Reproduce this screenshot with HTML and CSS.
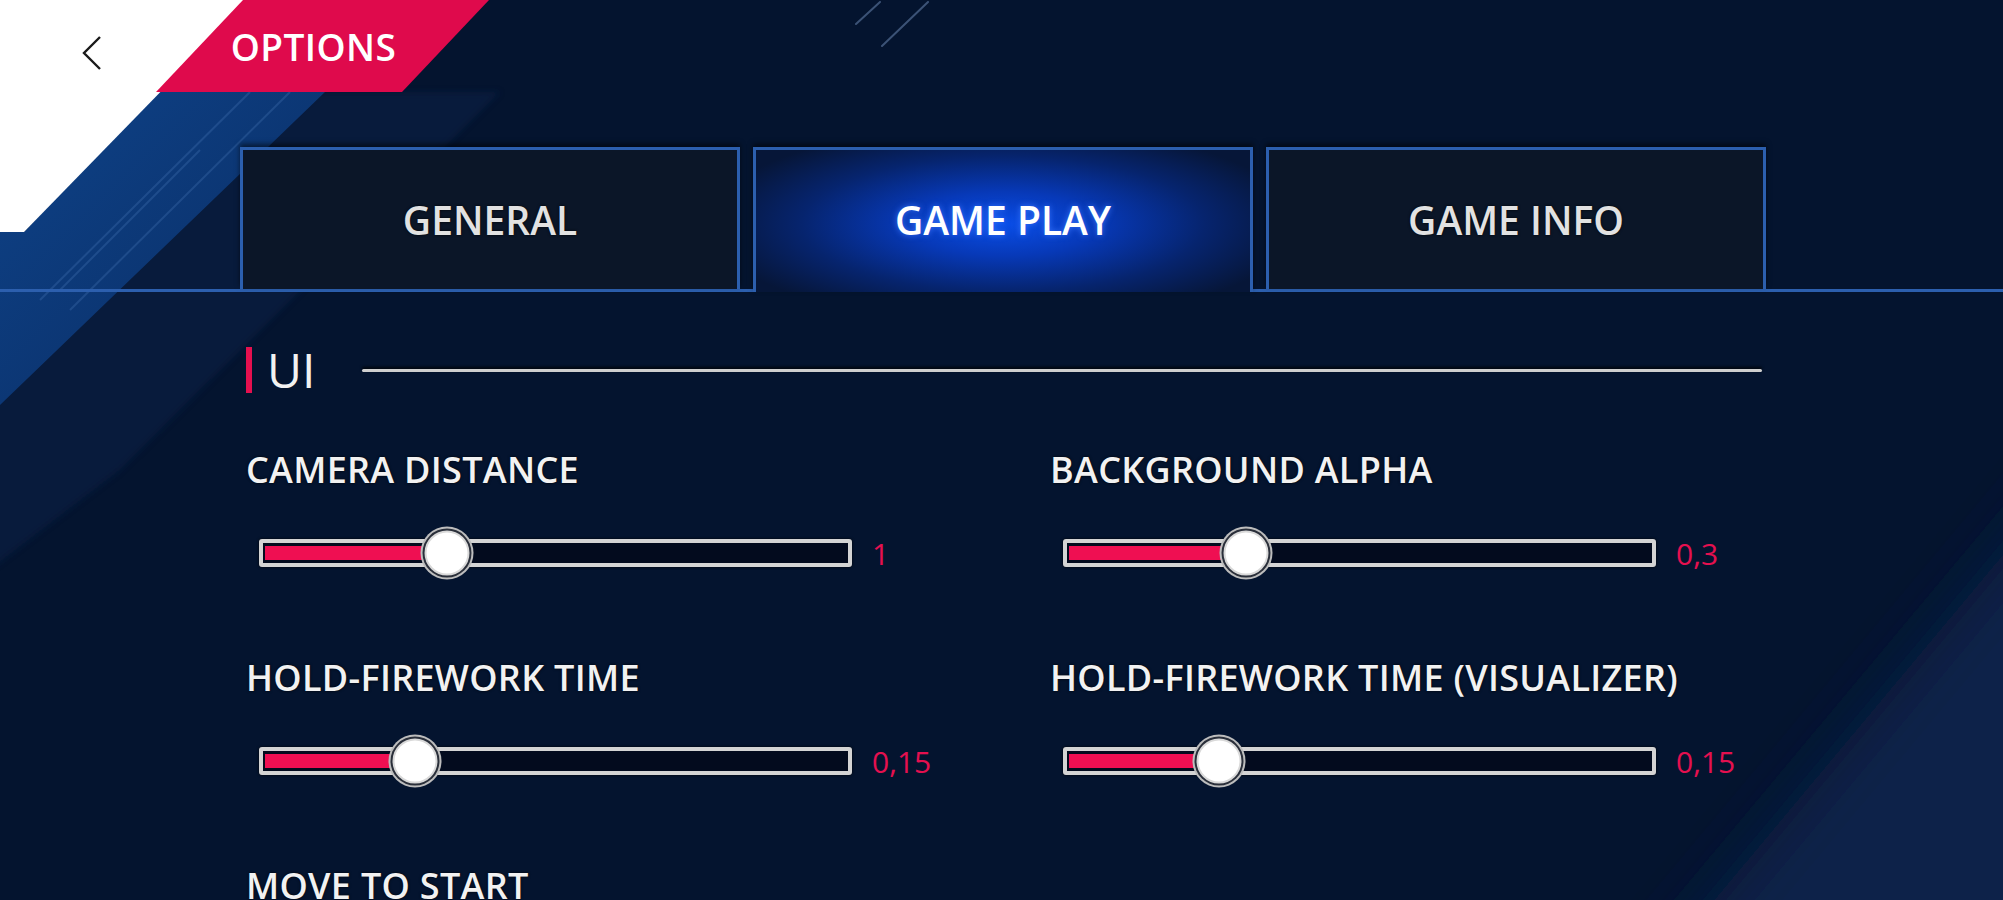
FILE: index.html
```html
<!DOCTYPE html>
<html lang="en">
<head>
<meta charset="utf-8">
<title>Options</title>
<link rel="stylesheet" href="styles.css">
</head>
<body>
<div class="screen">
  <svg class="bg" viewBox="0 0 2003 900" width="2003" height="900" aria-hidden="true">
    <defs>
      <linearGradient id="band" x1="0" y1="0" x2="1" y2="1">
        <stop offset="0" stop-color="#0e4288"/>
        <stop offset="1" stop-color="#0a2c62"/>
      </linearGradient>
      <filter id="soft" filterUnits="userSpaceOnUse" x="1000" y="0" width="1600" height="1400">
        <feGaussianBlur stdDeviation="30"/>
      </filter>
      <filter id="soft2" filterUnits="userSpaceOnUse" x="-200" y="0" width="900" height="800">
        <feGaussianBlur stdDeviation="3"/>
      </filter>
    </defs>
    <rect width="2003" height="900" fill="#04142f"/>
    <polygon points="2400,80 2400,1300 1380,1300" fill="#0a2249" filter="url(#soft)"/>
    <polygon points="320,92 500,92 120,470 -50,600 -50,400" fill="#08204a" opacity="0.5" filter="url(#soft2)"/>
    <polygon points="156,92 325,92 0,405 0,232 24,232" fill="url(#band)"/>
    <g stroke="#4a78b8" stroke-width="2" opacity="0.3">
      <line x1="250" y1="92" x2="40" y2="300"/>
      <line x1="290" y1="92" x2="70" y2="310"/>
      <line x1="200" y1="150" x2="60" y2="290"/>
    </g>
    <polygon points="0,0 250,0 24,232 0,232" fill="#ffffff"/>
    <g stroke="#8fb0e0" stroke-width="2" opacity="0.4" stroke-linecap="round">
      <line x1="928" y1="2" x2="882" y2="46"/>
      <line x1="880" y1="2" x2="856" y2="24"/>
    </g>
  </svg>

  <header class="topbar">
    <button class="back" type="button" aria-label="Back">
      <svg viewBox="0 0 24 38" width="24" height="38"><polyline points="20,3 4,19 20,35" fill="none" stroke="#1a1a1a" stroke-width="2.4"/></svg>
    </button>
    <div class="title"><span>OPTIONS</span></div>
  </header>

  <nav class="tabs">
    <div class="tab">GENERAL</div>
    <div class="tab active">GAME PLAY</div>
    <div class="tab">GAME INFO</div>
  </nav>

  <main class="content">
    <div class="section-head">
      <span class="mark"></span>
      <h2 class="section-title">UI</h2>
      <span class="rule"></span>
    </div>

    <div class="grid">
      <div class="setting">
        <div class="label">CAMERA DISTANCE</div>
        <div class="slider">
          <div class="track"><div class="fill" style="width:31.5%"></div><div class="thumb" style="left:31.5%"></div></div>
          <span class="value">1</span>
        </div>
      </div>
      <div class="setting">
        <div class="label">BACKGROUND ALPHA</div>
        <div class="slider">
          <div class="track"><div class="fill" style="width:30.6%"></div><div class="thumb" style="left:30.6%"></div></div>
          <span class="value">0,3</span>
        </div>
      </div>
      <div class="setting">
        <div class="label">HOLD-FIREWORK TIME</div>
        <div class="slider">
          <div class="track"><div class="fill" style="width:26%"></div><div class="thumb" style="left:26%"></div></div>
          <span class="value">0,15</span>
        </div>
      </div>
      <div class="setting">
        <div class="label">HOLD-FIREWORK TIME (VISUALIZER)</div>
        <div class="slider">
          <div class="track"><div class="fill" style="width:25.9%"></div><div class="thumb" style="left:25.9%"></div></div>
          <span class="value">0,15</span>
        </div>
      </div>
      <div class="setting">
        <div class="label">MOVE TO START</div>
      </div>
    </div>
  </main>
</div>
</body>
</html>
```

FILE: styles.css
```css
* { box-sizing: border-box; }

html, body {
  margin: 0;
  padding: 0;
  width: 2003px;
  height: 900px;
  overflow: hidden;
  background: #04142f;
}

.screen {
  position: relative;
  width: 2003px;
  height: 900px;
  overflow: hidden;
  font-family: "Open Sans", "Noto Sans", sans-serif;
  color: #f2f2f2;
}

.bg {
  position: absolute;
  left: 0;
  top: 0;
  z-index: 0;
}

.topbar, .tabs, .content {
  position: relative;
  z-index: 1;
}

/* ---------- header ---------- */
.topbar {
  display: flex;
  height: 92px;
  padding-left: 80px;
}

.back {
  align-self: flex-start;
  margin-top: 34px;
  width: 24px;
  height: 38px;
  padding: 0;
  border: 0;
  background: none;
  margin-right: 52px;
}
.back svg { display: block; }

.title {
  width: 333px;
  height: 92px;
  background: #df0a4c;
  clip-path: polygon(87px 0, 100% 0, calc(100% - 87px) 100%, 0 100%);
  display: flex;
  align-items: center;
  justify-content: center;
  padding-right: 18px;
}
.title span {
  font-size: 37px;
  font-weight: 600;
  color: #ffffff;
  letter-spacing: 0.4px;
}

/* ---------- tabs ---------- */
.tabs {
  display: flex;
  align-items: flex-end;
  gap: 13px;
  margin-top: 55px;
  padding-left: 240px;
  border-bottom: 3px solid #2c5fae;
}

.tab {
  width: 500px;
  height: 142px;
  border: 3px solid #2c5fae;
  border-bottom: 0;
  background: #0b1628;
  box-shadow: 0 -3px 5px rgba(0, 0, 0, 0.55);
  display: flex;
  align-items: center;
  justify-content: center;
  font-size: 39px;
  font-weight: 600;
  color: #e2e2e2;
  text-shadow: 0 0 3px rgba(0, 0, 0, 0.9);
}

.tab.active {
  height: 145px;
  margin-bottom: -3px;
  padding-bottom: 3px;
  background: radial-gradient(ellipse 60% 70% at 50% 52%, #0a4ee8 0%, #0739b8 32%, #06246e 68%, #061638 100%);
  color: #ffffff;
  text-shadow: 0 0 6px rgba(60, 120, 255, 0.9);
}

/* ---------- content ---------- */
.content {
  padding-left: 246px;
}

.section-head {
  display: flex;
  align-items: center;
  width: 1516px;
  height: 46px;
  margin-top: 55px;
}

.mark {
  width: 6px;
  height: 46px;
  background: #e5104f;
}

.section-title {
  margin: 0 0 0 15px;
  font-size: 48px;
  font-weight: 500;
  line-height: 46px;
  color: #f2f2f2;
}

.rule {
  flex: 1;
  height: 3px;
  margin-left: 47px;
  background: #cfcfcf;
  border-radius: 2px;
  box-shadow: 0 -2px 3px rgba(0, 0, 0, 0.8);
}

.grid {
  display: grid;
  grid-template-columns: 804px 804px;
  row-gap: 83px;
  margin-top: 59px;
}

.setting {
  display: flex;
  flex-direction: column;
}

.label {
  height: 36px;
  line-height: 36px;
  font-size: 36px;
  font-weight: 600;
  color: #f2f2f2;
  text-shadow: 0 0 3px rgba(0, 0, 0, 0.9);
  letter-spacing: 0.3px;
  white-space: nowrap;
}

.slider {
  display: flex;
  align-items: center;
  height: 48px;
  margin-top: 41px;
}

.track {
  position: relative;
  width: 593px;
  height: 28px;
  margin-left: 13px;
  border: 4px solid #d4d4d4;
  border-radius: 3px;
  background: #030b1e;
  padding: 3px 2px;
  box-shadow: 0 0 3px rgba(0, 0, 0, 0.9);
}

.fill {
  height: 100%;
  background: #ef0f52;
}

.thumb {
  position: absolute;
  top: 50%;
  width: 45px;
  height: 45px;
  border-radius: 50%;
  background: #ffffff;
  border: 2px solid #d9d9d9;
  box-shadow: 0 0 0 2px #2a2f3a, 0 0 0 4px #bdbdbd;
  transform: translate(-50%, -50%);
}

.value {
  margin-left: 20px;
  font-size: 30px;
  font-weight: 500;
  color: #e5104f;
}
```
